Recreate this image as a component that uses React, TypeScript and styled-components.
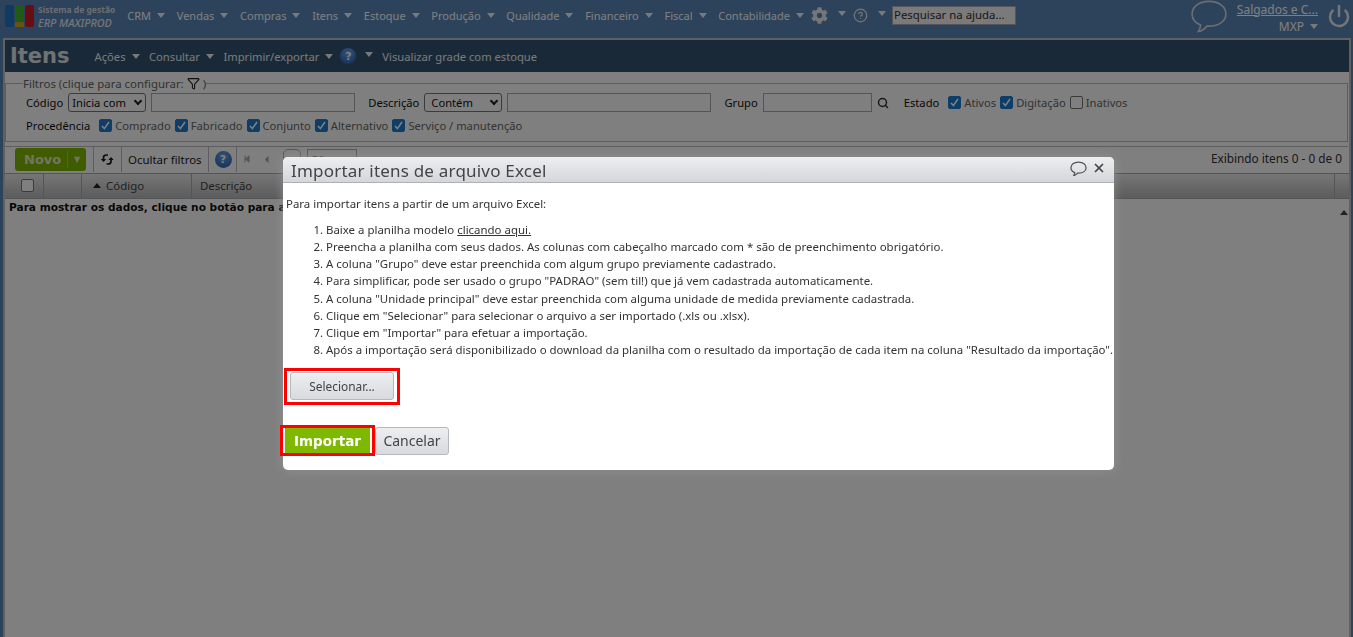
import styled, { createGlobalStyle } from 'styled-components'
import { Funnel, Power, Search, X, CircleHelp } from 'lucide-react'
import { FaCog, FaStepBackward, FaCaretLeft } from 'react-icons/fa'

const font = `"Noto Sans", "Open Sans", sans-serif`

const GlobalStyle = createGlobalStyle`
	* { box-sizing: border-box; }
	html, body { margin: 0; height: 100%; overflow: hidden; }
	body { font-family: ${font}; font-size: 11.44px; color: #222; background: #5b86b8; }
`

const menus = ['CRM', 'Vendas', 'Compras', 'Itens', 'Estoque', 'Produção', 'Qualidade', 'Financeiro', 'Fiscal', 'Contabilidade']

const steps = [
	<>Baixe a planilha modelo <u>clicando aqui.</u></>,
	'Preencha a planilha com seus dados. As colunas com cabeçalho marcado com * são de preenchimento obrigatório.',
	'A coluna "Grupo" deve estar preenchida com algum grupo previamente cadastrado.',
	'Para simplificar, pode ser usado o grupo "PADRAO" (sem til!) que já vem cadastrada automaticamente.',
	'A coluna "Unidade principal" deve estar preenchida com alguma unidade de medida previamente cadastrada.',
	'Clique em "Selecionar" para selecionar o arquivo a ser importado (.xls ou .xlsx).',
	'Clique em "Importar" para efetuar a importação.',
	'Após a importação será disponibilizado o download da planilha com o resultado da importação de cada item na coluna "Resultado da importação".',
]

const Check = ({ on = true }: { on?: boolean }) => (
	<CheckBox $on={on}>
		{on && (
			<svg width='11' height='11' viewBox='0 0 11 11'>
				<path d='M2 6l2.4 2.6L9 2' fill='none' stroke='#fff' strokeWidth='1.6' />
			</svg>
		)}
	</CheckBox>
)

const Logo = () => (
	<svg width='29' height='22' viewBox='0 0 29 22'>
		<rect x='0' y='0' width='9' height='22' rx='2' fill='#1c74c6' />
		<rect x='10' y='0' width='9' height='16' rx='1' fill='#3eb42e' />
		<rect x='10' y='17' width='9' height='5' rx='1' fill='#d4a424' />
		<rect x='20' y='0' width='9' height='22' rx='2' fill='#d01a28' />
	</svg>
)

const Bubble = ({ size, color, className }: { size: number; color: string; className?: string }) => (
	<svg className={className} width={size} height={size * 0.9} viewBox='0 0 36 32' fill='none' stroke={color} strokeWidth={36 / size + 0.6}>
		<path d='M18 2C8 2 2 7.500 2 14c0 4.500 3 8.500 8 10.500 0 2.500-1 4.500-2 6 3.500-.5 6-2.500 8-5h2c10 0 16-5 16-11.500S28 2 18 2Z' />
	</svg>
)

const RefreshArrows = () => (
	<svg width='15' height='13' viewBox='0 0 15 13' fill='none' stroke='#1a1a1a' strokeWidth='1.7'>
		<path d='M3.500 8V4.500C3.500 2.800 5 2 6.500 2H8' />
		<path d='M0.800 6l2.700 3 2.700-3' fill='#1a1a1a' stroke='none' />
		<path d='M11 5v3.500c0 1.700-1.500 2.500-3 2.500H6.500' />
		<path d='M8.300 7l2.700-3 2.700 3' fill='#1a1a1a' stroke='none' />
	</svg>
)

export default function App() {
	return (
		<>
			<GlobalStyle />
			<TopBar>
				<Brand>
					<Logo />
					<BrandText>
						<small>Sistema de gestão</small>
						<b>ERP MAXIPROD</b>
					</BrandText>
				</Brand>
				<Menu>
					{menus.map(m => (
						<MenuItem key={m}>
							{m}
							<Caret />
						</MenuItem>
					))}
				</Menu>
				<IconItem>
					<FaCog size={17} color='#e8ecf0' />
					<Caret />
				</IconItem>
				<IconItem>
					<CircleHelp size={15} color='#e8ecf0' />
					<Caret />
				</IconItem>
				<HelpSearch>Pesquisar na ajuda...</HelpSearch>
				<UserArea>
					<ChatIcon size={38} color='#d5dbe2' />
					<UserText>
						<u>Salgados e C...</u>
						<span>
							MXP
							<Caret />
						</span>
					</UserText>
					<PowerIcon size={24} strokeWidth={2.5} color='#e8ecf0' />
				</UserArea>
			</TopBar>
			<Frame>
				<PageHead>
					<PageTitle>Itens</PageTitle>
					<HeadItem>Ações<Caret /></HeadItem>
					<HeadItem>Consultar<Caret /></HeadItem>
					<HeadItem $right={7}>Imprimir/exportar<Caret /></HeadItem>
					<HelpBall $size={16}>?</HelpBall>
					<HeadCaret />
					<HeadItem>Visualizar grade com estoque</HeadItem>
				</PageHead>
				<Filters>
					<legend>
						Filtros (clique para configurar: <Funnel size={13} color='#222' /> )
					</legend>
					<FilterRow>
						<Label>Código</Label>
						<Select $w={78}>Inicia com<Chevron /></Select>
						<TextInput $w={204} />
						<Label $left={8}>Descrição</Label>
						<Select $w={78}>&nbsp;Contém<Chevron /></Select>
						<TextInput $w={204} />
						<Label $left={8}>Grupo</Label>
						<TextInput $w={109} />
						<Search size={12} color='#333' strokeWidth={3} />
						<Label $left={15}>Estado</Label>
						<Check /><Option>Ativos</Option>
						<Check /><Option>Digitação</Option>
						<Check on={false} /><Option>Inativos</Option>
					</FilterRow>
					<FilterRow>
						<Label>Procedência</Label>
						<Check /><Option>Comprado</Option>
						<Check /><Option>Fabricado</Option>
						<Check /><Option>Conjunto</Option>
						<Check /><Option>Alternativo</Option>
						<Check /><Option>Serviço / manutenção</Option>
					</FilterRow>
				</Filters>
				<Toolbar>
					<NewButton>
						Novo
						<NewCaret>▼</NewCaret>
					</NewButton>
					<ToolCell><RefreshArrows /></ToolCell>
					<ToolCell>Ocultar filtros</ToolCell>
					<ToolCell><HelpBall $size={17}>?</HelpBall></ToolCell>
					<Pager>
						<FaStepBackward size={8} color='#aaa' />
						<FaCaretLeft size={11} color='#aaa' />
						<PageButton />
						<PageBox>50</PageBox>
					</Pager>
					<Showing>Exibindo itens 0 - 0 de 0</Showing>
				</Toolbar>
				<TableHead>
					<HeadCell $w={39} $pad={16}><EmptyBox /></HeadCell>
					<HeadCell $w={38} />
					<HeadCell $w={110} $pad={11}><SortUp />Código</HeadCell>
					<HeadCell $w={1143} $pad={8}>Descrição</HeadCell>
				</TableHead>
				<EmptyRow>
					Para mostrar os dados, clique no botão para atualizar
					<ScrollUp />
				</EmptyRow>
			</Frame>
			<Overlay>
				<Modal>
					<ModalHead>
						<span>Importar itens de arquivo Excel</span>
						<ModalTools>
							<Bubble size={17} color='#555' />
							<X size={14} strokeWidth={3} color='#444' />
						</ModalTools>
					</ModalHead>
					<ModalBody>
						<Intro>Para importar itens a partir de um arquivo Excel:</Intro>
						<Steps>
							{steps.map((s, i) => (
								<li key={i}>{s}</li>
							))}
						</Steps>
						<Marked $left={-2} $pad='1px 3px 2px'>
							<GreyButton $w={104} $h={28} $size={11.9}>Selecionar...</GreyButton>
						</Marked>
						<Actions>
							<Marked $left={-6}>
								<SubmitButton>Importar</SubmitButton>
							</Marked>
							<GreyButton $w={74} $h={28} $size={14}>Cancelar</GreyButton>
						</Actions>
					</ModalBody>
				</Modal>
			</Overlay>
		</>
	)
}

const Caret = styled.i`
	display: inline-block;
	margin-left: 6px;
	border-left: 4px solid transparent;
	border-right: 4px solid transparent;
	border-top: 5px solid #f0f3f6;
	position: relative;
	top: -2px;
`

const TopBar = styled.header`
	height: 38px;
	display: flex;
	align-items: center;
	padding: 0 0 7px 5px;
	color: #fff;
	font-size: 11px;
`

const Brand = styled.div`
	display: flex;
	align-items: center;
	gap: 4px;
	margin-right: 12px;
`

const BrandText = styled.div`
	display: flex;
	flex-direction: column;
	line-height: 13px;

	small { font-size: 8.500px; font-weight: 700; color: #d5dbe2; }
	b { font-size: 10.800px; font-weight: 500; font-style: italic; color: #e8ecf0; }
`

const Menu = styled.nav`
	display: flex;
	gap: 11.700px;
`

const MenuItem = styled.span`
	white-space: nowrap;
`

const IconItem = styled.span`
	display: flex;
	align-items: center;
	margin-left: 7px;

	i { margin-left: 10px; top: -2px; }
`

const HelpSearch = styled.div`
	width: 124px;
	height: 19px;
	margin-left: 6px;
	background: #f4f4f4;
	border: 1px solid #aab;
	color: #333;
	font-size: 11.400px;
	line-height: 16px;
	padding-left: 1px;
	white-space: nowrap;
`

const UserArea = styled.div`
	display: flex;
	align-items: center;
	margin-left: auto;
	margin-bottom: -7px;
	gap: 9px;
	padding-right: 2px;
`

const ChatIcon = styled(Bubble)`
	margin-top: -5px;
`

const PowerIcon = styled(Power)`
	margin-top: -7px;
`

const UserText = styled.div`
	display: flex;
	flex-direction: column;
	align-items: flex-end;
	font-size: 12px;
	line-height: 17px;
	margin-top: -3px;
`

const Frame = styled.main`
	height: 599px;
	margin: 0 2px 0 3px;
	border: 2px solid #c0c0c0;
	border-bottom: 0;
	background: #fff;
	overflow: hidden;
`

const PageHead = styled.div`
	height: 32px;
	display: flex;
	align-items: center;
	padding-left: 5px;
	background: #34536f;
	color: #f0f3f6;
	font-size: 11.200px;
`

const PageTitle = styled.h1`
	margin: 0 25px 0 0;
	font-family: "DejaVu Sans", sans-serif;
	font-size: 21px;
	font-weight: 700;
	color: #e0e4e8;
`

const HeadItem = styled.span<{ $right?: number }>`
	margin-right: ${p => p.$right ?? 9.500}px;
	white-space: nowrap;
`

const HeadCaret = styled(Caret)`
	margin: 0 9px;
`

const HelpBall = styled.span<{ $size: number }>`
	display: inline-flex;
	align-items: center;
	justify-content: center;
	width: ${p => p.$size}px;
	height: ${p => p.$size}px;
	border-radius: 50%;
	background: radial-gradient(circle at 50% 30%, #6fa3e6, #1f5cae);
	color: #fff;
	font: 700 11px "DejaVu Sans", sans-serif;
`

const Filters = styled.fieldset`
	height: 66px;
	margin: 4px 1px 0 0;
	padding: 0 0 0 20px;
	border: 1px solid #bbb;
	min-width: 0;

	legend {
		padding: 0;
		margin-left: -3px;
		color: #666;
		display: flex;
		align-items: center;
		gap: 3px;
		height: 15px;
	}
`

const FilterRow = styled.div`
	height: 23px;
	display: flex;
	align-items: center;
	white-space: nowrap;
	font-size: 11.200px;
`

const Label = styled.span<{ $left?: number }>`
	margin-left: ${p => p.$left ?? 0}px;
	margin-right: 5px;
	color: #111;
`

const Select = styled.div<{ $w: number }>`
	width: ${p => p.$w}px;
	height: 19px;
	margin-right: 5px;
	padding-left: 3px;
	border: 1px solid #767676;
	border-radius: 3px;
	background: #fff;
	display: flex;
	align-items: center;
	justify-content: space-between;
	color: #111;
`

const Chevron = styled.i`
	width: 6px;
	height: 6px;
	margin: -3px 4px 0 0;
	border-right: 2px solid #222;
	border-bottom: 2px solid #222;
	transform: rotate(45deg);
`

const TextInput = styled.div<{ $w: number }>`
	width: ${p => p.$w}px;
	height: 19px;
	border: 1px solid #aaa;
	background: #fff;
	margin-right: 5px;
`

const CheckBox = styled.span<{ $on: boolean }>`
	width: 13px;
	height: 13px;
	margin-left: 4px;
	border-radius: 2px;
	border: 1px solid ${p => (p.$on ? '#1c7ccf' : '#767676')};
	background: ${p => (p.$on ? '#1c7ccf' : '#fff')};
	display: inline-flex;
	align-items: center;
	justify-content: center;
`

const Option = styled.span`
	margin-left: 3px;
	color: #666;
`

const Toolbar = styled.div`
	height: 27px;
	margin: 4px 1px 0 0;
	padding: 0 0 2px 10px;
	border-top: 1px solid #bbb;
	display: flex;
	align-items: center;
`

const NewButton = styled.div`
	width: 71px;
	height: 23px;
	display: flex;
	align-items: center;
	justify-content: space-between;
	padding-left: 9px;
	border-radius: 3px;
	background: #7fb800;
	color: #e8e8c8;
	font: 700 13px "DejaVu Sans", sans-serif;
`

const NewCaret = styled.span`
	width: 19px;
	border-left: 1px solid #9c6;
	text-align: center;
	font-size: 8px;
	line-height: 17px;
`

const ToolCell = styled.div`
	height: 26px;
	padding: 0 6px;
	margin-left: 7px;
	border-left: 1px solid #bbb;
	display: flex;
	align-items: center;
	white-space: nowrap;

	& + & { margin-left: 0; }
`

const Pager = styled.div`
	height: 26px;
	margin-left: -2px;
	padding-left: 6px;
	border-left: 1px solid #bbb;
	display: flex;
	align-items: center;
	gap: 10px;
`

const PageButton = styled.div`
	width: 18px;
	height: 20px;
	margin-left: 1px;
	border: 1px solid #aaa;
	border-radius: 5px;
`

const PageBox = styled.div`
	width: 50px;
	height: 20px;
	margin-left: -4px;
	padding-left: 4px;
	border: 1px solid #aaa;
	color: #666;
	line-height: 20px;
`

const Showing = styled.div`
	margin-left: auto;
	padding: 0 6px 2px 0;
	color: #333;
	font-size: 11.800px;
`

const TableHead = styled.div`
	height: 26px;
	padding-bottom: 2px;
	display: flex;
	background: linear-gradient(#ececec, #b8b9bc);
	border-top: 1px solid #aaa;
	border-bottom: 1px solid #aaa;
	color: #444;
`

const HeadCell = styled.div<{ $w: number; $pad?: number }>`
	width: ${p => p.$w}px;
	margin-bottom: -2px;
	padding-bottom: 2px;
	display: flex;
	align-items: center;
	padding-left: ${p => p.$pad ?? 0}px;
	border-right: 1px solid #aaa;
`

const EmptyBox = styled.span`
	width: 13px;
	height: 13px;
	border: 1px solid #767676;
	border-radius: 2px;
	background: #fff;
`

const SortUp = styled.i`
	margin-right: 5px;
	border-left: 4px solid transparent;
	border-right: 4px solid transparent;
	border-bottom: 5px solid #222;
`

const EmptyRow = styled.div`
	position: relative;
	padding: 2px 4px;
	font: 700 10.600px "DejaVu Sans", sans-serif;
	color: #111;
`

const ScrollUp = styled(SortUp)`
	position: absolute;
	right: 1px;
	top: 11px;
	margin: 0;
	border-bottom-color: #444;
`

const Overlay = styled.div`
	position: fixed;
	inset: 0;
	background: rgba(0, 0, 0, 0.5);
`

const Modal = styled.section`
	position: absolute;
	left: 283px;
	top: 157px;
	width: 831px;
	height: 313px;
	border-radius: 5px;
	background: #fff;
	box-shadow: 0 0 10px rgba(150, 150, 150, 0.8);
`

const ModalHead = styled.div`
	height: 26px;
	padding: 2px 8px 0;
	border-radius: 5px 5px 0 0;
	display: flex;
	align-items: center;
	justify-content: space-between;
	background: linear-gradient(#eceef0, #d4d6da);
	border-bottom: 1px solid #aeb0b8;
	font-size: 17px;
	letter-spacing: 0.2px;
	color: #444;
`

const ModalTools = styled.div`
	display: flex;
	align-items: center;
	gap: 5px;
	margin-top: -4px;
`

const ModalBody = styled.div`
	padding: 13px 3px 0;
	color: #333;
`

const Intro = styled.div`
	line-height: 16px;
`

const Steps = styled.ol`
	margin: 9px 0 10px;
	padding-left: 40px;
	line-height: 17.140px;
	white-space: nowrap;
`

const Marked = styled.div<{ $left: number; $pad?: string }>`
	display: inline-flex;
	margin-left: ${p => p.$left}px;
	border: 3px solid #f00;
	padding: ${p => p.$pad ?? '1px'};
`

const GreyButton = styled.div<{ $w: number; $h: number; $size: number }>`
	width: ${p => p.$w}px;
	height: ${p => p.$h}px;
	border: 1px solid #b4b8bf;
	border-radius: 3px;
	background: linear-gradient(#eceef0, #d8dade);
	display: flex;
	align-items: center;
	justify-content: center;
	color: #444;
	font-size: ${p => p.$size}px;
`

const Actions = styled.div`
	margin-top: 20px;
	display: flex;
	align-items: center;
`

const SubmitButton = styled.div`
	width: 89px;
	height: 25px;
	margin: -1px;
	border-left: 2px solid #fff;
	border-right: 2px solid #fff;
	background: #7fb800;
	color: #fff;
	display: flex;
	align-items: center;
	justify-content: center;
	font: 700 13.500px "DejaVu Sans", sans-serif;
`
